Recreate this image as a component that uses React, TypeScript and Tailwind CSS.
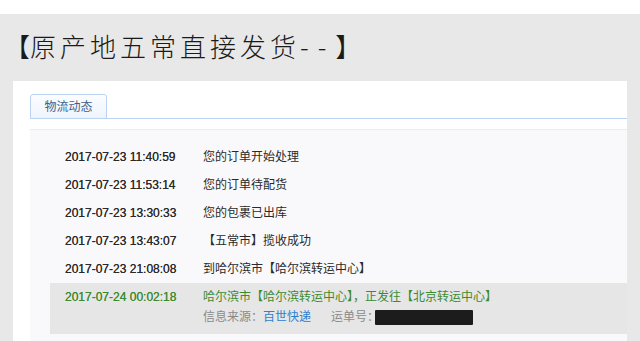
const rows = [
  { time: "2017-07-23 11:40:59", text: "您的订单开始处理" },
  { time: "2017-07-23 11:53:14", text: "您的订单待配货" },
  { time: "2017-07-23 13:30:33", text: "您的包裹已出库" },
  { time: "2017-07-23 13:43:07", text: "【五常市】揽收成功" },
  { time: "2017-07-23 21:08:08", text: "到哈尔滨市【哈尔滨转运中心】" },
]

export default function App() {
  return (
    <div
      className="w-[640px] h-[341px] overflow-hidden bg-white"
      style={{ fontFamily: '"Liberation Sans", "Noto Sans CJK SC", sans-serif' }}
    >
      <div className="mt-[14px] h-[327px] bg-[#e8e8e8] flex flex-col">
        {/* title */}
        <div className="h-[67px] pl-[4px] pt-[17px]">
          <div
            className="flex text-[26px] leading-[30px] font-light text-[#1a1a1a]"
            style={{ fontFamily: '"Noto Sans CJK SC", sans-serif' }}
          >
            <span>【</span>
            <span className="tracking-[4px]">原产地五常直接发货</span>
            <span className="tracking-[9px]">--</span>
            <span>】</span>
          </div>
        </div>

        {/* panel */}
        <div className="mx-[13px] flex-1 bg-white pl-[17px] pt-[13px]">
          <div className="flex h-[25px] border-b border-[#bcd3f3]">
            <div className="w-[77px] h-[25px] -mb-px rounded-t-[3px] border border-[#bcd3f3] bg-gradient-to-b from-[#fbfdff] to-[#eef4fd] flex items-center justify-center text-[12px] text-[#3e5f8a]">
              物流动态
            </div>
          </div>

          <div className="mt-[10px] h-full border-t border-[#ececf0] bg-[#f9f9fb] pl-[20px] pt-[13px]">
            {rows.map((r) => (
              <div key={r.time} className="flex h-[28px] items-center pl-[15px] text-[12px] text-[#2a2a2a]">
                <div className="w-[138px] [text-shadow:0_0_0.2px_#333]">{r.time}</div>
                <div>{r.text}</div>
              </div>
            ))}

            <div className="flex h-[51px] bg-[#e6e6e6] pl-[15px] pt-[4px] text-[12px]">
              <div className="w-[138px] leading-[20px] text-[#3e8a2f] [text-shadow:0_0_0.2px_#3e8a2f]">
                2017-07-24 00:02:18
              </div>
              <div className="flex flex-col">
                <div className="leading-[20px] text-[#3e8a2f]">
                  哈尔滨市【哈尔滨转运中心】，正发往【北京转运中心】
                </div>
                <div className="flex items-center leading-[20px] text-[#8a8a8a]">
                  <span>信息来源：</span>
                  <span className="text-[#2f80d0]">百世快递</span>
                  <span className="ml-[20px]">运单号：</span>
                  <span className="ml-[-4px] inline-block h-[15px] w-[98px] rounded-[1px] bg-[#1c1c1c] blur-[0.5px]" />
                </div>
              </div>
            </div>
          </div>
        </div>
      </div>
    </div>
  )
}
